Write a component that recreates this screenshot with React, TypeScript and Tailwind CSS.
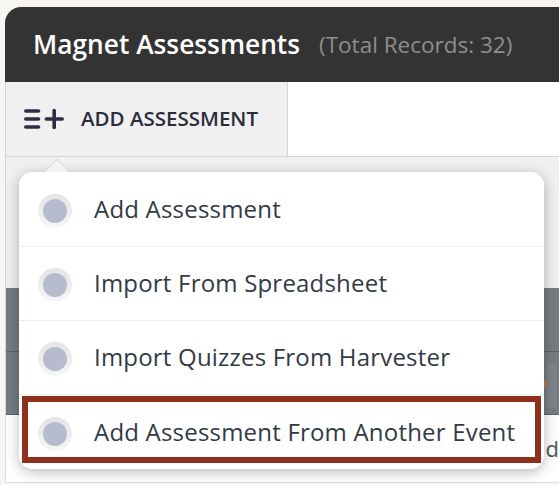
import React from 'react';

const menuItems = [
  'Add Assessment',
  'Import From Spreadsheet',
  'Import Quizzes From Harvester',
  'Add Assessment From Another Event',
];

const App: React.FC = () => {
  return (
    <div className="relative h-[485px] w-[559px] overflow-hidden bg-[#f7f6f2] font-['Open_Sans',sans-serif]">
      <div className="ml-[5px] pt-[7px]">
        <div className="flex h-[75px] items-center rounded-tl-[16px] bg-[#333333] pl-[28px]">
          <h1 className="text-[26.3px] font-semibold text-white">Magnet Assessments</h1>
          <span className="ml-[19px] text-[22.5px] text-[#8e8e8e]">(Total Records: 32)</span>
        </div>

        <div className="flex h-[75px] border-b border-[#d4d4d4] bg-white">
          <div className="flex w-[283px] items-center gap-[17px] border-r border-l border-[#d4d4d4] bg-[#f0f0f0] pl-[18px]">
            <svg width="40" height="22" viewBox="0 0 40 22" fill="none" stroke="#2b2d42" strokeWidth="3.6" strokeLinecap="round">
              <path d="M1.8 3H14.5" />
              <path d="M1.8 11H14.5" />
              <path d="M1.8 19H14.5" />
              <path d="M22.3 11H38.2" />
              <path d="M30.2 2.6V19.4" />
            </svg>
            <span className="mb-[1px] text-[20.5px] font-semibold text-[#2b2d3a]">ADD ASSESSMENT</span>
          </div>
        </div>

        <div className="h-[131px] border-l border-[#d4d4d4] bg-[#f0f0f0]" />

        <div className="border-l border-[#d4d4d4] bg-[#767c81]">
          <div className="h-[64px] border-b border-[#5b6168]" />
          <div className="flex h-[63px] items-center justify-end border-b border-[#5b6168] pr-[3px]">
            <span className="mr-[1px] h-[8px] w-[2px] rounded-full bg-[#c9793f]" />
            <span className="mt-[5px] h-[45px] w-[9px] bg-[#7f8488]" />
          </div>
        </div>

        <div className="flex h-[68px] items-start justify-end border-b border-[#dddddd] border-l bg-white">
          <span className="mt-[17px] text-[22px] text-[#4d5663]">d</span>
        </div>
      </div>

      <div className="absolute top-[172px] left-[19px] w-[525px] rounded-[14px] bg-white shadow-[0_3px_14px_rgba(0,0,0,0.28)]">
        <div className="absolute -top-[9px] left-[28px] size-[20px] rotate-45 border-t border-l border-[#d8d8d8] bg-[#f4f4f4]" />
        <div className="relative flex flex-col rounded-[14px] bg-white pt-[1px]">
          {menuItems.map((item, i) => (
            <div
              key={item}
              className={`flex h-[74px] items-center pl-[19px] ${i < 3 ? 'border-b border-[#eeeeee] pb-[1px]' : ''}`}
            >
              <span className="mt-[3px] flex size-[34px] items-center justify-center rounded-full bg-linear-to-b from-[#e4e4e4] to-[#f6f6f6]">
                <span className="size-[24px] rounded-full bg-[#b6bccd]" />
              </span>
              <span className="ml-[22px] text-[24px] tracking-[0.2px] text-[#333a45]">{item}</span>
            </div>
          ))}
        </div>
        <div className="absolute top-[224px] left-[3px] h-[67px] w-[519px] border-[6px] border-[#8f2f1c]" />
      </div>
    </div>
  );
};

export default App;
